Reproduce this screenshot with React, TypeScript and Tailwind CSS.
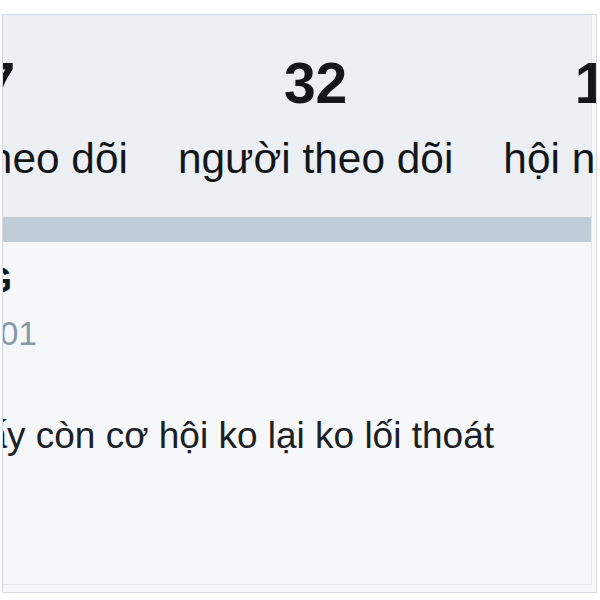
const stats = [
  { value: '7', label: 'đang theo dõi' },
  { value: '32', label: 'người theo dõi' },
  { value: '1', label: 'hội nhóm' },
]

export default function App() {
  return (
    <div className="w-[600px] h-[600px] overflow-hidden bg-white pt-[14px] font-['Liberation_Sans',Arial,sans-serif] text-[#14171a]">
      <div className="ml-[2px] mr-[3px] h-[579px] border border-[#d3d9de] bg-[#f5f7f9] overflow-hidden">
        <div className="h-[570px] border-r border-b border-[#e4e8ec] mr-[4px] flex flex-col">
          {/* thống kê */}
          <div className="bg-[#ecf0f4] pt-[40px] pb-[37px]">
            <div className="flex gap-[50px] -ml-[132px]">
              {stats.map(s => (
                <div key={s.label} className="flex flex-col items-center shrink-0">
                  <span className="text-[57px] font-bold leading-none">{s.value}</span>
                  <span className="mt-[26px] text-[42.4px] leading-[42px] whitespace-nowrap">{s.label}</span>
                </div>
              ))}
            </div>
          </div>
          <div className="h-[25px] bg-[#c1ccd6] shrink-0" />

          {/* hồ sơ */}
          <div className="flex-1 pt-[21px] -ml-[119px] whitespace-nowrap">
            <div className="text-[36px] font-bold leading-none">THẮNG</div>
            <div className="mt-[18px] text-[33px] leading-none text-[#8899a6]">@thg2001</div>
            <div className="mt-[67px] text-[37px] leading-none text-[#1c2024]">
              Giờ thấy còn cơ hội ko lại ko lối thoát
            </div>
          </div>
        </div>
      </div>
    </div>
  )
}
